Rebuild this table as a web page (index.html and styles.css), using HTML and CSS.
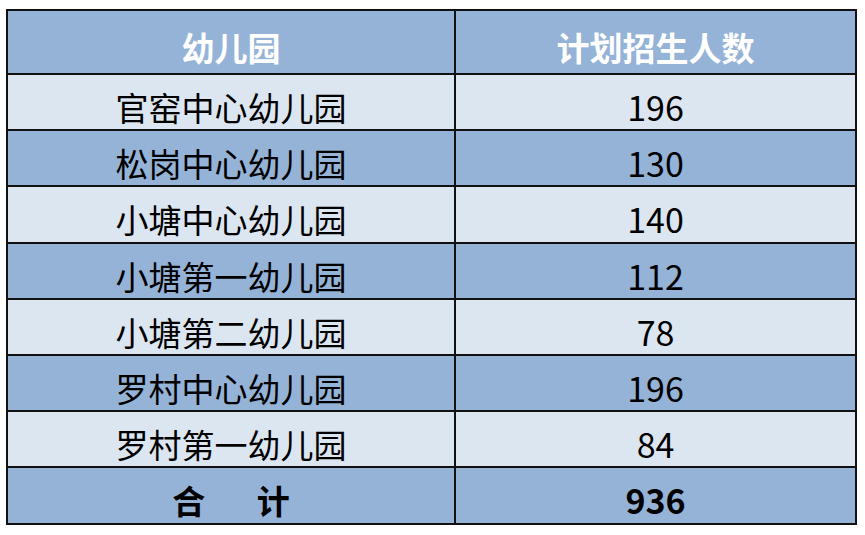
FILE: index.html
```html
<!DOCTYPE html>
<html lang="zh-CN">
<head>
<meta charset="utf-8">
<title>幼儿园计划招生人数</title>
<link rel="stylesheet" href="styles.css">
</head>
<body>
<table class="plan">
  <thead>
    <tr class="head">
      <th class="col-name">幼儿园</th>
      <th class="col-num">计划招生人数</th>
    </tr>
  </thead>
  <tbody>
    <tr class="light"><td>官窑中心幼儿园</td><td class="num">196</td></tr>
    <tr class="dark"><td>松岗中心幼儿园</td><td class="num">130</td></tr>
    <tr class="light"><td>小塘中心幼儿园</td><td class="num">140</td></tr>
    <tr class="dark"><td>小塘第一幼儿园</td><td class="num">112</td></tr>
    <tr class="light"><td>小塘第二幼儿园</td><td class="num">78</td></tr>
    <tr class="dark"><td>罗村中心幼儿园</td><td class="num">196</td></tr>
    <tr class="light"><td>罗村第一幼儿园</td><td class="num">84</td></tr>
    <tr class="dark total"><td><span class="total-label">合 计</span></td><td class="num">936</td></tr>
  </tbody>
</table>
</body>
</html>
```

FILE: styles.css
```css
html, body {
  margin: 0;
  padding: 0;
  background: #ffffff;
}

body {
  font-family: "Noto Sans CJK SC", "Noto Sans", sans-serif;
}

.plan {
  margin: 9px 0 0 6px;
  width: 851px;
  border-collapse: collapse;
  border: 2px solid #2b2b2b;
  table-layout: fixed;
}

.plan th,
.plan td {
  border: 2px solid #111111;
  text-align: center;
  vertical-align: middle;
  padding: 10px 0 0 0;
  font-size: 33px;
  line-height: 40px;
  color: #000000;
}

.plan td.num {
  font-size: 34px;
}

.col-name {
  width: 446px;
}

.head {
  height: 64px;
  background: #95b3d7;
}

.head th {
  color: #ffffff;
  font-weight: 700;
  font-size: 33px;
}

.plan tbody tr {
  height: 56.2px;
}

.light {
  background: #dce6f1;
}

.dark {
  background: #95b3d7;
}

.total td {
  font-weight: 700;
}

.total-label {
  word-spacing: 44px;
}
```
